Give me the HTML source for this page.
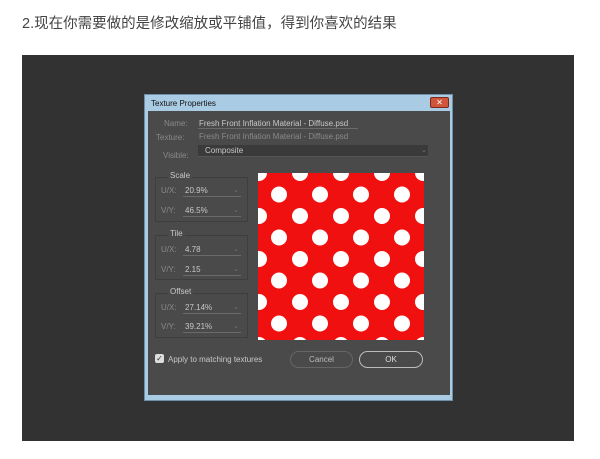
<!DOCTYPE html><html><head><meta charset="utf-8"><style>
*{margin:0;padding:0;box-sizing:border-box}
body{width:600px;height:459px;background:#fff;position:relative;overflow:hidden;font-family:"Liberation Sans",sans-serif}
.a{position:absolute}
.t{font-size:8px;color:#c8c8c8;white-space:nowrap}
.l{color:#8a8a8a}
.grp{border:1px solid #3e3e3e;}
.ul{border-bottom:1px solid #6a6a6a}
.cv{color:#777;font-size:7px}
</style></head><body>
<div class="a" style="left:22px;top:12px;font-size:14.5px;color:#444;font-family:'Liberation Sans','Noto Sans CJK SC',sans-serif;white-space:nowrap">2.现在你需要做的是修改缩放或平铺值，得到你喜欢的结果</div>
<div class="a" style="left:22px;top:55px;width:552px;height:386px;background:#323232"></div>
<div class="a" style="left:144px;top:94px;width:309px;height:307px;background:#a9cbe4;border:1px solid #6f8fa8"></div>
<div class="a t" style="left:151px;top:99px;color:#111;font-size:8px">Texture Properties</div>
<div class="a" style="left:430px;top:97px;width:19px;height:11px;background:#d0553a;border:1px solid #7a2a1a;border-radius:2px;color:#fff;font-size:8px;text-align:center;line-height:9px">✕</div>
<div class="a" style="left:148px;top:111px;width:302px;height:284px;background:#4a4a4a"></div>
<div class="a t l" style="left:164px;top:119px">Name:</div>
<div class="a t" style="left:199px;top:119px">Fresh Front Inflation Material - Diffuse.psd</div>
<div class="a ul" style="left:198px;top:128px;width:160px"></div>
<div class="a t l" style="left:156px;top:133px">Texture:</div>
<div class="a t l" style="left:199px;top:132px">Fresh Front Inflation Material - Diffuse.psd</div>
<div class="a t l" style="left:163px;top:151px">Visible:</div>
<div class="a" style="left:198px;top:145px;width:230px;height:12px;background:#3a3a3a;border-bottom:1px solid #555"></div>
<div class="a t" style="left:205px;top:146px">Composite</div>
<div class="a cv" style="left:421px;top:146px">⌄</div>

<div class="a grp" style="left:155px;top:177px;width:93px;height:45px"></div>
<div class="a t" style="left:168px;top:171px;background:#4a4a4a;padding:0 2px">Scale</div>
<div class="a t l" style="left:161px;top:186px">U/X:</div><div class="a t" style="left:185px;top:186px">20.9%</div><div class="a ul" style="left:183px;top:196px;width:58px"></div><div class="a cv" style="left:233px;top:186px">⌄</div>
<div class="a t l" style="left:161px;top:206px">V/Y:</div><div class="a t" style="left:185px;top:206px">46.5%</div><div class="a ul" style="left:183px;top:216px;width:58px"></div><div class="a cv" style="left:233px;top:206px">⌄</div>

<div class="a grp" style="left:155px;top:235px;width:93px;height:45px"></div>
<div class="a t" style="left:168px;top:229px;background:#4a4a4a;padding:0 2px">Tile</div>
<div class="a t l" style="left:161px;top:245px">U/X:</div><div class="a t" style="left:185px;top:245px">4.78</div><div class="a ul" style="left:183px;top:255px;width:58px"></div><div class="a cv" style="left:233px;top:245px">⌄</div>
<div class="a t l" style="left:161px;top:265px">V/Y:</div><div class="a t" style="left:185px;top:265px">2.15</div><div class="a ul" style="left:183px;top:275px;width:58px"></div><div class="a cv" style="left:233px;top:265px">⌄</div>

<div class="a grp" style="left:155px;top:293px;width:93px;height:45px"></div>
<div class="a t" style="left:168px;top:287px;background:#4a4a4a;padding:0 2px">Offset</div>
<div class="a t l" style="left:161px;top:303px">U/X:</div><div class="a t" style="left:185px;top:303px">27.14%</div><div class="a ul" style="left:183px;top:313px;width:58px"></div><div class="a cv" style="left:233px;top:303px">⌄</div>
<div class="a t l" style="left:161px;top:322px">V/Y:</div><div class="a t" style="left:185px;top:322px">39.21%</div><div class="a ul" style="left:183px;top:332px;width:58px"></div><div class="a cv" style="left:233px;top:322px">⌄</div>

<svg class="a" style="left:258px;top:173px" width="166" height="167" viewBox="0 0 166 167">
<defs><pattern id="p" width="41" height="43" patternUnits="userSpaceOnUse" x="1" y="0">
<rect width="41" height="43" fill="#f01010"/>
<circle cx="0" cy="0" r="8" fill="#fff"/><circle cx="41" cy="0" r="8" fill="#fff"/><circle cx="0" cy="43" r="8" fill="#fff"/><circle cx="41" cy="43" r="8" fill="#fff"/>
<circle cx="20" cy="21.5" r="8" fill="#fff"/></pattern></defs>
<rect width="166" height="167" fill="url(#p)"/></svg>

<div class="a" style="left:155px;top:354px;width:9px;height:9px;background:#ddd;border-radius:2px;color:#333;font-size:8px;line-height:9px;text-align:center">✓</div>
<div class="a t" style="left:168px;top:355px">Apply to matching textures</div>
<div class="a" style="left:290px;top:351px;width:63px;height:17px;border:1px solid #666;border-radius:9px;color:#bbb;font-size:8px;text-align:center;line-height:15px">Cancel</div>
<div class="a" style="left:359px;top:351px;width:64px;height:17px;border:1px solid #bbb;border-radius:9px;color:#ddd;font-size:8px;text-align:center;line-height:15px">OK</div>
</body></html>
